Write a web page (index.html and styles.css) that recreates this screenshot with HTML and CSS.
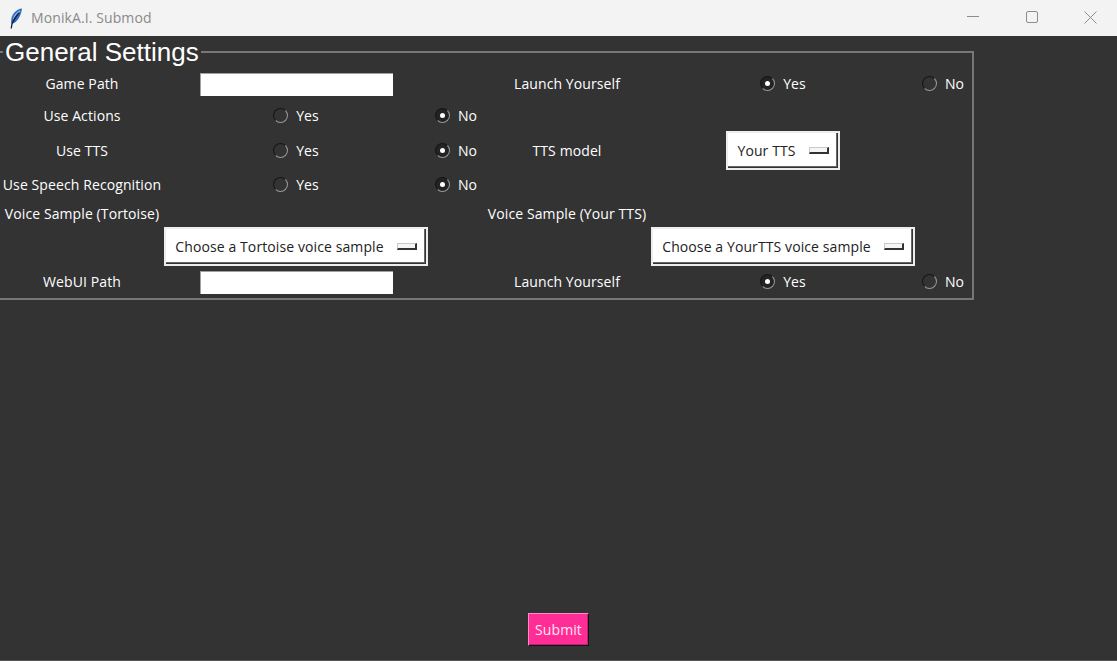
FILE: index.html
```html
<!DOCTYPE html>
<html lang="en">
<head>
    <meta charset="UTF-8">
    <meta name="viewport" content="width=device-width, initial-scale=1.0">
    <title>MonikA.I. Submod</title>
    <link rel="stylesheet" href="styles.css">
</head>
<body>

    <header class="titlebar">
        <svg class="app-icon" width="14" height="21" viewBox="0 0 14 21">
            <path d="M13 0.5 C8 1 3.5 5 2.4 10.5 L2 15.5 L4.4 15.2 C8.5 13.5 12 8 13 0.5 Z" fill="#2f6cc4"/>
            <path d="M11 3 C8 4.5 5.5 7.5 4.5 11" fill="none" stroke="#9cc3ee" stroke-width="1.2"/>
            <path d="M10 5 C7 8 4.5 12 3 16 L2.2 20.5" fill="none" stroke="#16202e" stroke-width="1.3"/>
        </svg>
        <span class="app-name">MonikA.I. Submod</span>
        <div class="window-buttons">
            <span class="window-button">
                <svg width="12" height="12" viewBox="0 0 12 12"><path d="M0 5.5 H12" stroke="#8c8c8c" fill="none"/></svg>
            </span>
            <span class="window-button">
                <svg width="12" height="12" viewBox="0 0 12 12"><rect x="0.5" y="0.5" width="11" height="11" rx="1.5" stroke="#8c8c8c" fill="none"/></svg>
            </span>
            <span class="window-button">
                <svg width="13" height="13" viewBox="0 0 13 13"><path d="M0.5 0.5 L12.5 12.5 M12.5 0.5 L0.5 12.5" stroke="#8c8c8c" fill="none"/></svg>
            </span>
        </div>
    </header>

    <main class="content">
        <fieldset class="settings">
            <legend>General Settings</legend>
            <div class="settings-grid">

                <!-- row 1 -->
                <span class="cell">Game Path</span>
                <span class="cell control"><input class="path-input" type="text"></span>
                <span class="cell"></span>
                <span class="cell">Launch Yourself</span>
                <span class="cell"><span class="radio selected"></span>Yes</span>
                <span class="cell"><span class="radio"></span>No</span>

                <!-- row 2 -->
                <span class="cell">Use Actions</span>
                <span class="cell"><span class="radio"></span>Yes</span>
                <span class="cell"><span class="radio selected"></span>No</span>
                <span class="cell"></span>
                <span class="cell"></span>
                <span class="cell"></span>

                <!-- row 3 -->
                <span class="cell">Use TTS</span>
                <span class="cell"><span class="radio"></span>Yes</span>
                <span class="cell"><span class="radio selected"></span>No</span>
                <span class="cell">TTS model</span>
                <span class="cell control"><span class="option-menu">Your TTS<span class="option-mark"></span></span></span>
                <span class="cell"></span>

                <!-- row 4 -->
                <span class="cell">Use Speech Recognition</span>
                <span class="cell"><span class="radio"></span>Yes</span>
                <span class="cell"><span class="radio selected"></span>No</span>
                <span class="cell"></span>
                <span class="cell"></span>
                <span class="cell"></span>

                <!-- row 5 -->
                <span class="cell">Voice Sample (Tortoise)</span>
                <span class="cell"></span>
                <span class="cell"></span>
                <span class="cell">Voice Sample (Your TTS)</span>
                <span class="cell"></span>
                <span class="cell"></span>

                <!-- row 6 -->
                <span class="cell"></span>
                <span class="cell control"><span class="option-menu">Choose a Tortoise voice sample<span class="option-mark"></span></span></span>
                <span class="cell"></span>
                <span class="cell"></span>
                <span class="cell control"><span class="option-menu">Choose a YourTTS voice sample<span class="option-mark"></span></span></span>
                <span class="cell"></span>

                <!-- row 7 -->
                <span class="cell">WebUI Path</span>
                <span class="cell control"><input class="path-input" type="text"></span>
                <span class="cell"></span>
                <span class="cell">Launch Yourself</span>
                <span class="cell"><span class="radio selected"></span>Yes</span>
                <span class="cell"><span class="radio"></span>No</span>

            </div>
        </fieldset>

        <div class="submit-row">
            <button class="submit-button">Submit</button>
        </div>
    </main>

</body>
</html>
```

FILE: styles.css
```css
* {
    box-sizing: border-box;
}

html, body {
    height: 100%;
}

body {
    font-family: "Open Sans", "Noto Sans", sans-serif;
    font-size: 14px;
    letter-spacing: 0.1px;
    margin: 0;
    padding: 0;
    background-color: #333;
    color: #fff;
    display: flex;
    flex-direction: column;
    overflow: hidden;
}

.titlebar {
    height: 36px;
    flex: none;
    background-color: #f3f3f3;
    color: #8a8a8a;
    display: flex;
    align-items: center;
    padding-left: 9px;
}

.app-icon {
    margin-right: 8px;
}

.app-name {
    font-size: 14px;
    padding-bottom: 2px;
}

.window-buttons {
    margin-left: auto;
    display: flex;
}

.window-button {
    width: 59px;
    height: 36px;
    padding: 0 0 2px 6px;
    display: flex;
    align-items: center;
    justify-content: center;
}

.content {
    flex: 1;
    display: flex;
    flex-direction: column;
    border-bottom: 1px solid #555;
}

.settings {
    width: 974px;
    margin: 0;
    padding: 0;
    border: 2px solid #777;
    border-left: 0;
    min-width: 0;
}

.settings legend {
    font-family: "Liberation Sans", Arial, sans-serif;
    font-size: 26px;
    letter-spacing: 0;
    line-height: 32px;
    margin-left: 3px;
    padding: 0 2px;
}

.settings-grid {
    display: grid;
    grid-template-columns: 164px 264px 56px 166px 266px 54px;
    grid-template-rows: 32px 31px 39px 30px 27px 39px 32px;
}

.cell {
    display: flex;
    align-items: center;
    justify-content: center;
    white-space: nowrap;
    padding-bottom: 1px;
}

.cell.control {
    padding-bottom: 0;
}

.path-input {
    width: 193px;
    height: 23px;
    margin-top: 1px;
    border: 0;
    border-top: 1px solid #a0a0a0;
    border-left: 1px solid #a0a0a0;
    background-color: #fff;
    padding: 0;
}

.radio {
    width: 15px;
    height: 15px;
    margin-right: 8px;
    border-radius: 50%;
    border: 1px solid;
    border-color: #161616 #9a9a9a #9a9a9a #161616;
    background-color: #333;
    display: flex;
    align-items: center;
    justify-content: center;
}

.radio.selected {
    background-color: #232323;
}

.radio.selected::after {
    content: "";
    width: 5px;
    height: 5px;
    border-radius: 50%;
    background-color: #fff;
}

.option-menu {
    display: flex;
    align-items: center;
    height: 39px;
    padding: 0 9px;
    background-color: #fff;
    color: #222;
    border: 2px solid #ededed;
    box-shadow: inset -1px -1px 0 #333, inset -2px -2px 0 #666;
}

.option-mark {
    width: 20px;
    height: 7px;
    margin-left: 13px;
    background-color: #f5f5f5;
    border: 1px solid #c8c8c8;
    border-right: 2px solid #333;
    border-bottom: 2px solid #333;
}

.submit-row {
    margin-top: auto;
    height: 47px;
    display: flex;
    justify-content: center;
}

.submit-button {
    width: 61px;
    height: 33px;
    font-family: inherit;
    font-size: 14px;
    letter-spacing: inherit;
    color: #ffe6f3;
    background-color: #ff2d95;
    padding: 0;
    border: 1px solid;
    border-color: #ff8cc6 #111 #111 #ff8cc6;
    box-shadow: inset -1px -1px 0 #c01f73;
}
```
